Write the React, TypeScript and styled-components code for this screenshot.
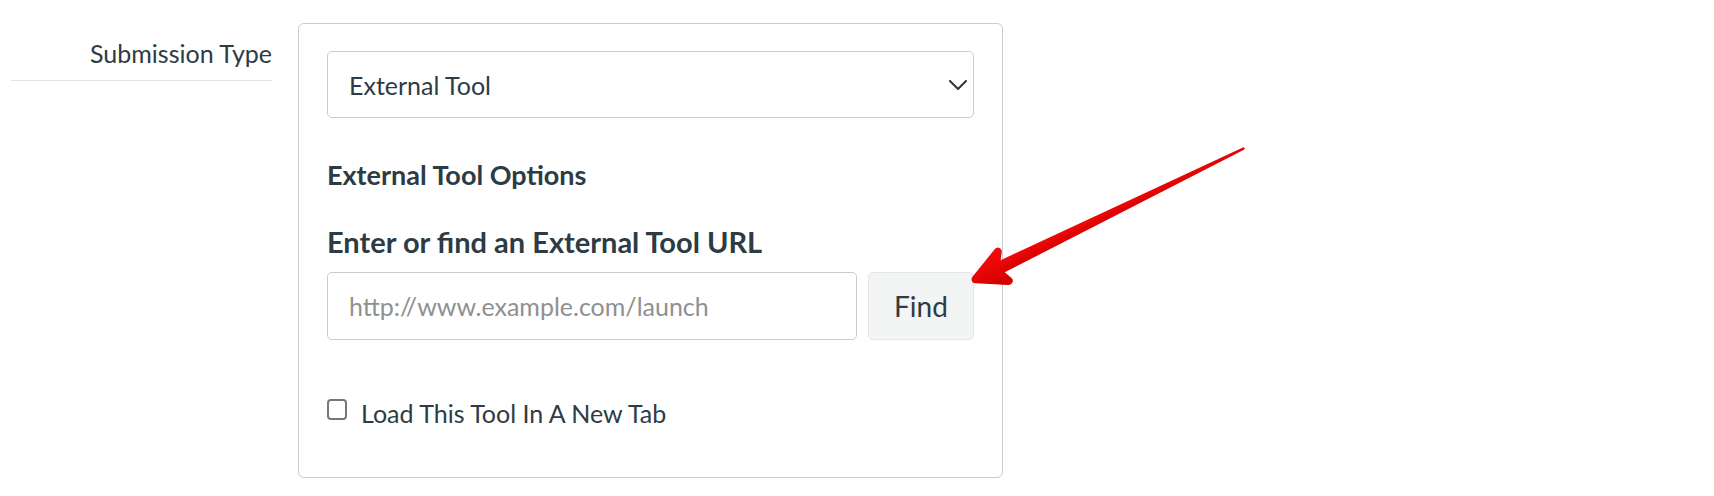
import React from 'react';
import styled, { createGlobalStyle } from 'styled-components';

const GlobalStyle = createGlobalStyle`
  html, body {
    margin: 0;
    padding: 0;
    background: #fff;
    font-family: Lato, "Open Sans", "Liberation Sans", sans-serif;
    color: #2d3b45;
  }
  * {
    box-sizing: border-box;
  }
`;

const Page = styled.div`
  position: relative;
  width: 1714px;
  height: 496px;
  overflow: hidden;
  background: #fff;
`;

const FormRow = styled.div`
  display: flex;
  align-items: flex-start;
  gap: 26px;
  padding: 23px 0 0 11px;
`;

const FieldLabel = styled.div`
  width: 261px;
  padding: 12px 0 9px;
  border-bottom: 1px solid #e2e4e6;
  text-align: right;
  font-size: 25px;
  line-height: 36px;
  color: #2d3b45;
`;

const Panel = styled.div`
  width: 705px;
  border: 1px solid #c8cdd1;
  border-radius: 6px;
  padding: 27px 28px 46px;
`;

const SelectWrap = styled.div`
  position: relative;
  height: 67px;
`;

const Select = styled.select`
  appearance: none;
  width: 100%;
  height: 67px;
  border: 1px solid #c8cdd1;
  border-radius: 5px;
  background: #fff;
  padding: 0 40px 0 21px;
  font-family: inherit;
  font-size: 25px;
  color: #2d3b45;
  outline: none;
`;

const Chevron = styled.svg`
  position: absolute;
  right: 7px;
  top: 50%;
  transform: translateY(-50%);
  pointer-events: none;
`;

const SectionTitle = styled.h3`
  margin: 39px 0 0;
  font-size: 27px;
  font-weight: 700;
  line-height: 36px;
  color: #2d3b45;
`;

const UrlLabel = styled.div`
  margin-top: 26px;
  font-size: 29px;
  font-weight: 700;
  line-height: 45px;
  color: #2d3b45;
`;

const UrlRow = styled.div`
  display: flex;
  gap: 11px;
  margin-top: 8px;
`;

const UrlInput = styled.input`
  flex: 1;
  min-width: 0;
  height: 68px;
  border: 1px solid #c8cdd1;
  border-radius: 5px;
  padding: 0 21px;
  font-family: inherit;
  font-size: 25px;
  color: #2d3b45;
  outline: none;

  &::placeholder {
    color: #8e9091;
  }
`;

const FindButton = styled.button`
  width: 106px;
  height: 68px;
  border: 1px solid #e4e6e7;
  border-radius: 5px;
  background: #f3f4f4;
  font-family: inherit;
  font-size: 28px;
  color: #2d3b45;
  cursor: pointer;
`;

const CheckRow = styled.label`
  display: flex;
  align-items: flex-start;
  gap: 14px;
  margin-top: 55px;
  font-size: 25px;
  line-height: 36px;
  color: #2d3b45;
`;

const CheckBox = styled.input`
  appearance: none;
  width: 20px;
  height: 21px;
  margin: 4px 0 0;
  border: 2px solid #73787c;
  border-radius: 4px;
  background: #fff;
`;

const ArrowLayer = styled.svg`
  position: absolute;
  left: 0;
  top: 0;
  pointer-events: none;
`;

// annotation arrow, tip at the Find button, tail up to the right
const Arrow: React.FC = () => (
  <ArrowLayer width={1714} height={496} viewBox="0 0 1714 496">
    <defs>
      <linearGradient id="arrowFill" x1="0" y1="0" x2="0" y2="1">
        <stop offset="0" stopColor="#f20a0a" />
        <stop offset="1" stopColor="#d40000" />
      </linearGradient>
    </defs>
    <g transform="translate(972 281) rotate(-26)">
      <path
        d="M20 -6.5 L302 -1.2 A1.2 1.2 0 0 1 302 1.2 L20 6.8 Z"
        fill="url(#arrowFill)"
      />
      <path
        d="M4 0 L36 -15 L26 0 L33 16 Z"
        fill="url(#arrowFill)"
        stroke="url(#arrowFill)"
        strokeWidth={8}
        strokeLinejoin="round"
      />
    </g>
  </ArrowLayer>
);

const App: React.FC = () => {
  return (
    <Page>
      <GlobalStyle />
      <FormRow>
        <FieldLabel>Submission Type</FieldLabel>
        <Panel>
          <SelectWrap>
            <Select defaultValue="external_tool">
              <option value="external_tool">External Tool</option>
            </Select>
            <Chevron width="18" height="10" viewBox="0 0 18 10">
              <path d="M1 1 L9 9 L17 1" fill="none" stroke="#333" strokeWidth="2" strokeLinecap="round" strokeLinejoin="round" />
            </Chevron>
          </SelectWrap>
          <SectionTitle>External Tool Options</SectionTitle>
          <UrlLabel>Enter or find an External Tool URL</UrlLabel>
          <UrlRow>
            <UrlInput type="text" placeholder="http://www.example.com/launch" />
            <FindButton type="button">Find</FindButton>
          </UrlRow>
          <CheckRow>
            <CheckBox type="checkbox" />
            Load This Tool In A New Tab
          </CheckRow>
        </Panel>
      </FormRow>
      <Arrow />
    </Page>
  );
};

export default App;
